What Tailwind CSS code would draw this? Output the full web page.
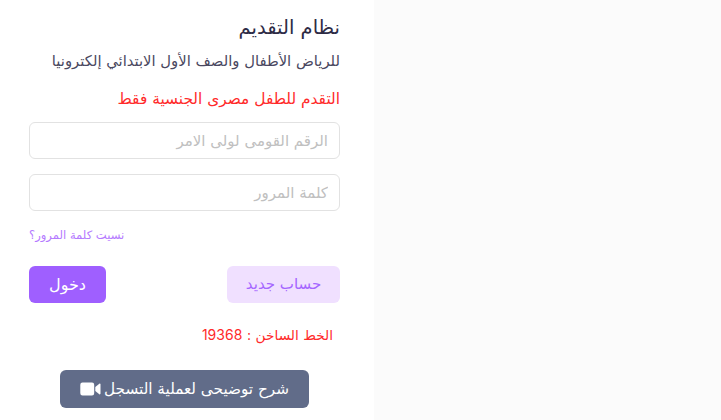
<!DOCTYPE html>
<html lang="ar">
<head>
  <meta charset="UTF-8">
  <meta name="viewport" content="width=device-width, initial-scale=1.0">
  <script src="https://cdn.jsdelivr.net/npm/@tailwindcss/browser@4"></script>
  <title>نظام التقديم</title>
</head>
<body class="bg-[#fbfbfb] h-[420px] overflow-hidden flex font-['DejaVu_Sans',sans-serif]">
  <div dir="rtl" class="bg-white w-[374px] h-full pr-[34px] pl-[29px] pt-[16px] overflow-hidden">
    <h2 class="text-[19.500px] leading-[24px] text-[#2d2b45]">نظام التقديم</h2>
    <p class="mt-[9px] text-[14.800px] leading-[24px] text-[#4a4860]">للرياض الأطفال والصف الأول الابتدائي إلكترونيا</p>
    <p class="mt-[14px] text-[15.400px] leading-[24px] text-[#ff2a2a]">التقدم للطفل مصرى الجنسية فقط</p>
    <input type="text" placeholder="الرقم القومى لولى الامر" class="block mt-[11px] w-full h-[37px] px-[11px] border border-[#e2e2e2] rounded-md text-[15px] placeholder:text-[#c0c0c0] bg-white">
    <input type="password" placeholder="كلمة المرور" class="block mt-[15px] w-full h-[37px] px-[11px] border border-[#e2e2e2] rounded-md text-[15px] placeholder:text-[#c0c0c0] bg-white">
    <div class="mt-[14px] flex justify-end">
      <a href="#" class="text-[11.600px] leading-[20px] text-[#b57bff]">نسيت كلمة المرور؟</a>
    </div>
    <div class="mt-[21px] flex justify-between">
      <button class="w-[113px] h-[37px] rounded-md bg-[#f0e0ff] text-[#a566ff] text-[15px]">حساب جديد</button>
      <button class="w-[77px] h-[37px] rounded-md bg-[#9f5fff] text-white text-[16px]">دخول</button>
    </div>
    <p class="mt-[20px] pr-[7px] text-[13.700px] leading-[24px] text-[#ff2a2a]">الخط الساخن : <span class="text-[14px] font-['Inter',sans-serif]">19368</span></p>
    <div class="mt-[23px] flex justify-center">
      <button class="w-[249px] h-[38px] rounded-md bg-[#616c89] text-white text-[15.250px] flex items-center justify-center gap-[3px]">
        <span>شرح توضيحى لعملية التسجل</span>
        <svg width="21" height="14" viewBox="0 0 21 14" fill="#fff"><path d="M2.500 0.500h9.500a2.200 2.200 0 0 1 2.200 2.200v8.600a2.200 2.200 0 0 1-2.200 2.200H2.500a2.200 2.200 0 0 1-2.200-2.200V2.700a2.200 2.200 0 0 1 2.200-2.200z"/><path d="M15.300 5l4-3.200c.6-.4 1.200-.1 1.200.6v9.200c0 .7-.6 1-1.200.6l-4-3.200z"/></svg>
      </button>
    </div>
  </div>
</body>
</html>
